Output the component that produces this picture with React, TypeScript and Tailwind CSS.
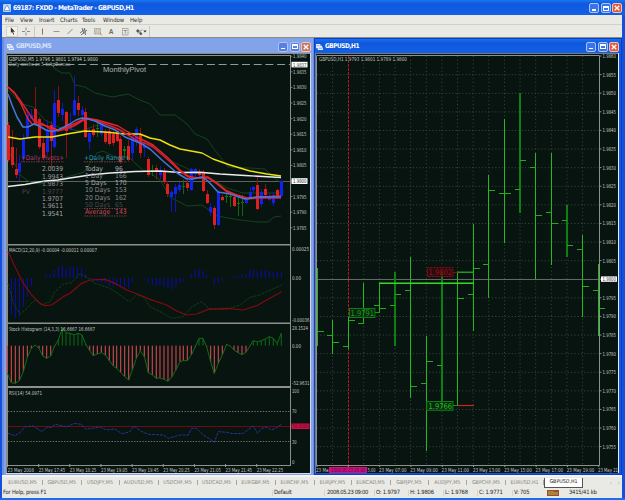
import { clsx } from "clsx";

type Candle = [x: number, high: number, low: number, top: number, bottom: number, tone: "r" | "b" | "g"];

const menus = [
  { label: "File", width: "w-[15px]" },
  { label: "View", width: "w-[19px]" },
  { label: "Insert", width: "w-[21px]" },
  { label: "Charts", width: "w-[22px]" },
  { label: "Tools", width: "w-[21px]" },
  { label: "Window", width: "w-[27px]" },
  { label: "Help", width: "w-[20px]" },
];

const chartTabs = [
  { label: "EURUSD,M5", width: "w-[40px]" },
  { label: "GBPUSD,M5", width: "w-[38.5px]" },
  { label: "USDJPY,M5", width: "w-[38px]" },
  { label: "AUDUSD,M5", width: "w-[39px]" },
  { label: "USDCHF,M5", width: "w-[39px]" },
  { label: "USDCAD,M5", width: "w-[39px]" },
  { label: "EURGBP,M5", width: "w-[39px]" },
  { label: "EURCHF,M5", width: "w-[39px]" },
  { label: "EURJPY,M5", width: "w-[37px]" },
  { label: "EURCAD,M5", width: "w-[39px]" },
  { label: "GBPJPY,M5", width: "w-[38px]" },
  { label: "AUDJPY,M5", width: "w-[38.5px]" },
  { label: "GBPCHF,M5", width: "w-[39px]" },
  { label: "EURUSD,H1", width: "w-[38px]" },
];

const candles: Candle[] = [
  [8, 122, 162, 125, 160, "r"],
  [11.7, 130, 168, 147, 165, "r"],
  [15.5, 148, 178, 169, 175, "r"],
  [19.4, 155, 181, 163, 172, "b"],
  [23.4, 134, 162, 138, 158, "b"],
  [27.2, 112, 139, 115, 137, "b"],
  [31, 109, 119, 115, 119, "b"],
  [35, 87, 125, 109, 125, "r"],
  [39, 117, 149, 119, 147, "r"],
  [42.8, 138, 160, 143, 158, "r"],
  [46.6, 120, 155, 130, 152, "b"],
  [50.6, 121, 168, 125, 141, "r"],
  [54.4, 90, 149, 103, 147, "b"],
  [58.4, 86, 117, 100, 113, "r"],
  [62.3, 103, 121, 109, 115, "b"],
  [66.2, 111, 158, 112, 131, "r"],
  [70, 113, 130, 124, 129, "b"],
  [74, 76, 116, 100, 115, "b"],
  [78, 96, 116, 103, 110, "r"],
  [82, 106, 119, 110, 115, "b"],
  [85.4, 108, 138, 112, 137, "r"],
  [89.4, 128, 150, 133, 142, "b"],
  [93.4, 124, 137, 129, 135, "r"],
  [97.4, 119, 137, 128, 129, "g"],
  [101.3, 122, 136, 125, 134, "b"],
  [105.2, 129, 144, 132, 142, "r"],
  [109, 128, 146, 131, 144, "r"],
  [113, 131, 146, 134, 143, "r"],
  [117, 129, 142, 131, 141, "r"],
  [120.4, 136, 164, 139, 162, "r"],
  [124.4, 146, 158, 149, 151, "g"],
  [128.4, 140, 162, 146, 160, "r"],
  [132.4, 134, 160, 137, 153, "b"],
  [136.3, 127, 146, 129, 142, "b"],
  [140.2, 128, 158, 134, 153, "r"],
  [144.1, 142, 157, 146, 148, "b"],
  [148.1, 157, 177, 159, 175, "r"],
  [152, 165, 176, 170, 171, "g"],
  [155.8, 165, 179, 168, 172, "r"],
  [160, 166, 179, 170, 175, "b"],
  [164, 168, 184, 172, 182, "r"],
  [167.4, 181, 197, 184, 194, "r"],
  [171.4, 190, 212, 192, 197, "b"],
  [175.4, 184, 212, 187, 194, "b"],
  [179.4, 182, 192, 185, 190, "b"],
  [183.4, 180, 194, 186, 187, "g"],
  [187.3, 180, 191, 183, 188, "r"],
  [191.2, 168, 191, 169, 190, "b"],
  [195.1, 168, 177, 169, 174, "b"],
  [199, 169, 178, 172, 175, "r"],
  [203, 170, 192, 172, 191, "r"],
  [206.9, 190, 204, 194, 203, "r"],
  [210.4, 203, 216, 207, 212, "b"],
  [214.4, 206, 229, 208, 225, "r"],
  [218.4, 190, 226, 192, 225, "b"],
  [222.4, 195, 201, 197, 200, "r"],
  [226.3, 193, 203, 196, 197, "g"],
  [230.2, 193, 207, 196, 197, "g"],
  [234.2, 194, 207, 197, 206, "r"],
  [238.2, 196, 216, 203, 204, "g"],
  [242, 195, 216, 202, 203, "g"],
  [246, 197, 204, 200, 203, "b"],
  [249.9, 187, 199, 192, 198, "b"],
  [253.4, 186, 192, 187, 190, "b"],
  [257.4, 177, 210, 185, 209, "r"],
  [261.4, 189, 207, 192, 204, "b"],
  [265.4, 184, 198, 189, 195, "r"],
  [269.2, 194, 201, 196, 200, "b"],
  [273.2, 192, 206, 195, 203, "b"],
  [277.2, 189, 198, 190, 196, "r"],
  [281.2, 180, 197, 181, 196, "b"],
];

const body = { r: "#e02020", b: "#1023ec", g: "#0b7a12" };
const wick = { r: "#8c1010", b: "#0d19b8", g: "#0b6a10" };

const pivots = [
  ["2.0039", 171, "#a8a4ac"],
  ["1.9943", 178.5, "#9a949e"],
  ["1.9873", 186, "#8d8890"],
  ["1.9777", 193.5, "#4c464c"],
  ["1.9707", 200.7, "#a39ca4"],
  ["1.9611", 208, "#a09aa0"],
  ["1.9541", 215.5, "#aaa6ac"],
] as const;

const ranges = [
  ["Today", "96", 171, "#b4b0b8"],
  ["1 Day", "166", 178.3, "#8d8890"],
  ["5 Days", "170", 185, "#a8a4a8"],
  ["10 Days", "153", 192.2, "#908a90"],
  ["20 Days", "162", 199.6, "#8c868c"],
  ["50 Days", "65", 207, "#50484e"],
  ["Average", "143", 214.4, "#c84858"],
] as const;

// bars and curves of the sub windows are kept at 3x and scaled down by their group
const macd: [number, number][] = [
  [34, 225], [46, 235], [58, 230], [70, 200], [82, 170], [94, 138], [138, 105], [150, 102], [162, 90], [175, 80],
  [187, 75], [198, 85], [210, 80], [220, 80], [232, 80], [245, 85], [257, 102], [269, 118], [280, 125], [292, 125],
  [304, 130], [316, 130], [328, 138], [340, 138], [350, 140], [362, 142], [374, 148], [386, 145], [397, 125],
  [433, 117], [445, 128], [457, 133], [469, 138], [480, 138], [492, 140], [504, 145], [516, 148], [528, 140],
  [540, 128], [550, 123], [574, 103], [586, 88], [597, 88], [609, 92], [620, 105], [643, 135], [655, 128],
  [667, 122], [680, 118], [702, 110], [714, 108], [726, 106], [738, 102], [750, 90], [760, 88], [772, 95],
  [784, 90], [796, 90], [808, 93], [820, 97], [832, 96], [844, 95],
];

const histogram: [number, number][] = [
  [22, 160], [34, 188], [46, 190], [58, 182], [70, 155], [82, 112], [94, 85], [105, 75], [117, 85], [128, 108],
  [140, 115], [152, 108], [163, 80], [175, 60], [187, 25], [198, 38], [210, 40], [222, 45], [234, 40], [246, 45],
  [257, 72], [269, 92], [280, 107], [292, 102], [304, 98], [316, 105], [328, 122], [340, 138], [350, 145],
  [362, 157], [374, 170], [386, 180], [397, 150], [409, 115], [421, 92], [433, 110], [445, 158], [457, 165],
  [469, 175], [480, 174], [492, 178], [504, 184], [516, 170], [528, 150], [540, 125], [550, 122], [562, 122],
  [574, 105], [586, 80], [597, 55], [609, 55], [620, 80], [632, 125], [643, 160], [655, 130], [667, 105],
  [680, 73], [690, 78], [702, 90], [714, 98], [726, 104], [738, 97], [750, 78], [760, 62], [772, 66], [784, 62],
  [796, 57], [808, 50], [820, 55], [832, 70], [844, 40],
];

// x, high, low, open, close, stroke width
const bars: [number, number, number, number | null, number | null, number][] = [
  [317.5, 268, 346, null, 331.5, 1],
  [332.5, 320, 354, 335.5, 342.5, 1],
  [348.5, 316.5, 349, 346, 320.5, 1],
  [363.5, 283, 323.5, 323.5, 309.5, 1],
  [379.5, 283, 312.5, 305.5, 308.5, 1],
  [395, 272.3, 346, 305.5, 294.5, 2],
  [410.5, 257, 398, 290.5, 386.5, 1],
  [426.5, 335.5, 451, 383.5, 361.5, 1],
  [442, 272.3, 408, 365.5, 401.5, 2],
  [457.5, 272, 405.5, 405.5, 298.5, 1],
  [473.5, 223.5, 331, 294.5, 268.5, 1],
  [488.5, 175, 298, 264.5, 190.5, 1],
  [504.5, 119, 243, 193.5, 193.5, 1],
  [520, 93, 212.5, 189.5, 160.5, 2],
  [535.5, 153, 279, 167.5, 215.5, 1],
  [551.5, 153, 265, 212.5, 223.5, 1],
  [567, 205, 257, 220.5, 245.5, 2],
  [582.5, 234.5, 317, 249.5, 286.5, 1],
  [598.5, 264, 336, 290.5, 308.5, 1],
];

const leftTimes = ["2008", "17:45", "18:25", "19:05", "19:45", "20:25", "21:05", "21:45", "22:25"];
const rightTimes = ["07:00", "09:00", "11:00", "13:00", "15:00", "17:00", "19:00"];
const leftPrices = [
  "1.9840", "1.9835", "1.9830", "1.9825", "1.9820", "1.9815", "1.9810", "1.9805", "", "1.9795", "1.9790", "1.9785",
];

function Label({ x, y, w, fill = "#c2c6c4", size = 5.5, children }: {
  x: number;
  y: number;
  w?: number;
  fill?: string;
  size?: number;
  children: string;
}) {
  return (
    <text x={x} y={y} fontSize={size} fill={fill} textLength={w} lengthAdjust="spacingAndGlyphs">
      {children}
    </text>
  );
}

function Curve({ points, stroke, width = 1.2, dash }: {
  points: string;
  stroke: string;
  width?: number;
  dash?: string;
}) {
  return <polyline points={points} fill="none" stroke={stroke} strokeWidth={width} strokeDasharray={dash} strokeLinejoin="round" />;
}

function CaptionButtons({ faded }: { faded?: boolean }) {
  const blue = faded ? "bg-[#5a7fdc]" : "bg-[#3b74ea]";
  return (
    <div className="flex gap-[1.5px]">
      <span className={clsx("flex size-[10px] items-end rounded-[2px] border border-[#a9c4fa] p-[1.5px]", blue)}>
        <i className="h-[1.5px] w-[4px] bg-white" />
      </span>
      <span className={clsx("flex size-[10px] items-center justify-center rounded-[2px] border border-[#a9c4fa]", blue)}>
        <i className="h-[5px] w-[6px] border border-t-2 border-white" />
      </span>
      <span className={clsx("flex size-[10px] items-center justify-center rounded-[2px] border border-[#f0c4bc]", faded ? "bg-[#c8745f]" : "bg-[#e2593a]")}>
        <svg className="size-[6px]" viewBox="0 0 6 6">
          <path d="M.7.7 5.3 5.3M5.3.7.7 5.3" stroke="#fff" strokeWidth="1.3" />
        </svg>
      </span>
    </div>
  );
}

function ChartIcon() {
  return (
    <svg className="h-[6px] w-[7px]" viewBox="0 0 8 7">
      <path d="M0 0h5v2h2v2h1v3H2V5H0z" fill="#e9f0ff" />
      <path d="M1 2h3M3 5h4" stroke="#5f86d8" strokeWidth=".8" />
    </svg>
  );
}

function PivotChart() {
  return (
    <svg className="block h-[421px] w-[305px]" viewBox="6 53 305 421" fontFamily="'DejaVu Sans', sans-serif">
      <rect x="6" y="53" width="305" height="421" fill="#08140f" />
      <path d="M6 53.5h305M6.5 53v421" stroke="#8b8a86" />
      <path d="M7.5 55.5h283M7.5 55v410.3M290.5 55v410.5" stroke="#8a8f8c" fill="none" />
      <path d="M7 244.7h284M7 323.3h284" stroke="#8f8f8d" strokeWidth="1.5" />
      <path d="M7 387h284" stroke="#8f8f8d" strokeWidth="2" />
      <path d="M7 465.5h284" stroke="#8f8f8d" />

      <path d="M8 64.5h282" stroke="#959896" strokeDasharray="8 3.7" />
      <path d="M8 181.5h282" stroke="#5c6260" />

      <Curve stroke="#134a1e" width={0.9} points="50,62 55,69 62,73 70,73 75,85 85,87 95,93 112,97 128,94 140,100 150,104 160,115 175,115 187,124 195,134 207,139 214,149 228,167 250,168 265,169 273,177 281,183" />
      <Curve stroke="#134a1e" width={0.9} points="8,90 22,104 33,107 45,120 58,127 80,131 98,125 115,129 130,132 148,142 160,152 173,162 195,172 210,178 227,188 243,193 281,193" />
      <Curve stroke="#134a1e" width={0.9} points="8,150 20,175 28,181 40,184 67,177 84,172 92,160 97,153 103,151 117,158 128,156 136,164 143,170 150,173 160,180 170,197 187,206 202,205 217,216 240,220 258,222 268,222 274,217 281,216" />

      <g shapeRendering="crispEdges">
        {candles.map(([x, high, low, top, bottom, tone]) => (
          <g key={x}>
            <rect x={Math.round(x)} y={high} width="1" height={low - high} fill={wick[tone]} />
            <rect x={Math.round(x) - 1} y={top} width="3" height={bottom - top} fill={body[tone]} />
          </g>
        ))}
      </g>

      <Curve stroke="#f0e010" width={1.4} points="8,137 20,139 35,137 52,137 67,134 85,131 105,132 125,134 140,134 150,138 160,140 170,145 180,149 202,153 213,159 230,165 250,171 267,174 281,176" />
      <Curve stroke="#ececec" width={1.4} points="8,186.5 25,184.5 45,181 58,180 70,178 90,175 110,173 135,171.5 160,171 180,172.5 200,172.3 220,174 245,175.5 281,177.5" />
      <Curve stroke="#d02040" width={1.5} points="8,87 14,92 20,100 28,112 34,121 43,124 50,129 58,131 66,129 74,126 82,121 88,119 97,121 108,125 118,129 128,135 138,141 147,144 153,147 167,159 180,171 188,177 200,178 208,178 217,184 227,192 237,196 247,199 260,198 281,198" />
      <Curve stroke="#ee2222" width={1.4} points="8,87 15,94 21,104 28,119 32,124 43,125 50,127 58,130 70,126 80,121 86,118 97,120 108,123 118,126 128,132 138,138 147,142 153,145 167,157 180,170 188,176 195,178 208,177 217,183 227,191 237,195 247,198 260,197 281,196" />
      <Curve stroke="#4a76dc" width={1.5} points="8,94 12,105 17,117 23,127 28,127 34,124 39,126 46,130 52,131.5 58,130 64,127 70,124 76,120 82,118 88,119 95,121 105,126 115,130 125,137 135,141 142,144 150,149 163,161 177,173 187,179 193,179 202,177 208,181 218,192 230,194 245,199 257,197 281,197" />

      <Label x={9} y={61} w={89} fill="#ced4d0">GBPUSD,M5  1.9796 1.9801 1.9794 1.9800</Label>
      <Label x={9} y={66.3} w={61} fill="#a8b0aa">Daily weeks on 5-tickpBureau</Label>
      <text x="103" y="72" fontSize="7.6" fill="#aeb2b4" textLength="43" fontFamily="'Liberation Sans', sans-serif">MonthlyPivot</text>

      <Label x={21} y={159.5} w={43} size={6.6} fill="#b43a78">+Daily Pivots+</Label>
      <path d="M21 161.8h43" stroke="#a03a58" strokeDasharray="1.5 1" strokeWidth=".8" />
      <Label x={22} y={193.5} w={8} size={6.4} fill="#4a444a">PV</Label>
      {pivots.map(([value, y, fill]) => (
        <Label key={value} x={42} y={y} w={21} size={6.8} fill={fill}>{value}</Label>
      ))}
      <Label x={84} y={159.5} w={46} size={6.6} fill="#2e9cb4">+Daily Range+</Label>
      <path d="M84 161.8h43" stroke="#a04858" strokeDasharray="1.5 1" strokeWidth=".8" />
      {ranges.map(([name, value, y, fill]) => (
        <g key={name}>
          <Label x={85} y={y} w={name.length * 3.6} size={6.8} fill={fill}>{name}</Label>
          <Label x={115} y={y} w={value.length * 3.9} size={6.8} fill={fill}>{value}</Label>
        </g>
      ))}
      <path d="M84 208.5h43M84 216h43" stroke="#a04050" strokeDasharray="1.5 1" strokeWidth=".8" />

      {leftPrices.map((price, i) => (
        <g key={i}>
          <path d={`M291 ${56.2 + i * 15.6}h1.5`} stroke="#8f8f8d" strokeWidth=".8" />
          <Label x={293} y={58.1 + i * 15.6} w={13.5}>{price}</Label>
        </g>
      ))}
      <rect x="291.5" y="61.8" width="16" height="5.6" fill="#fff" />
      <Label x={293} y={66.5} w={13.5} fill="#444">1.9837</Label>
      <rect x="291.5" y="178.2" width="16" height="5.8" fill="#fff" />
      <Label x={293} y={183} w={13.5} fill="#222">1.9800</Label>

      <g transform="translate(0 240) scale(.3333)">
        {macd.map(([x, y]) => (
          <rect key={x} x={x - 1.5} y={Math.min(y, 114)} width="3" height={Math.abs(y - 114)} fill="#0c0cae" />
        ))}
        <Curve stroke="#114a16" width={2.4} dash="9 3" points="24,130 40,190 60,223 80,205 105,180 125,195 150,185 165,155 190,132 215,128 240,100 265,115 285,130 330,145 360,165 388,185 410,165 430,170 450,200 490,220 515,235 550,230 575,200 605,185 625,205 655,208 680,208 720,195 750,172 780,165 800,155 845,135" />
        <Curve stroke="#820a10" width={3.6} points="24,35 45,80 70,130 95,165 120,190 135,197 155,195 190,170 210,160 245,130 270,120 315,118 345,130 380,150 420,165 450,178 500,195 530,213 560,225 590,222 625,208 680,205 730,210 770,197 800,180 845,155" />
      </g>
      <Label x={9} y={252} w={88}>MACD(12,20,9) -0.00004 -0.00011 0.00007</Label>
      <Label x={292} y={250.5} w={17}>0.00025</Label>
      <Label x={292} y={280} w={9}>0.00</Label>
      <Label x={292} y={322} w={17.5}>-0.00036</Label>

      <g transform="translate(0 320) scale(.3333)">
        {histogram.map(([x, y]) => (
          <rect key={x} x={x - 1.7} y={Math.min(y, 77)} width="3.4" height={Math.abs(y - 77)} fill={y > 77 ? "#c8484e" : "#0a6412"} />
        ))}
        <Curve stroke="#126c18" width={3} points={histogram.map((point) => point.join(",")).join(" ")} />
      </g>
      <Label x={9} y={331} w={86}>Stock Histogram (14,3,3) 16.6667 16.6667</Label>
      <Label x={292} y={329.5} w={16}>28.1524</Label>
      <Label x={292} y={347.5} w={9}>0.00</Label>
      <Label x={292} y={385} w={17.5}>-52.9631</Label>

      <path d="M8 411.5h282M8 441.5h282" stroke="#6b706c" strokeDasharray="1.4 1.4" />
      <path d="M8 426.5h282" stroke="#6e0a14" />
      <g transform="translate(0 385) scale(.3333)">
        <Curve stroke="#2438a0" width={2.8} dash="9 3" points="24,145 45,152 60,143 75,125 100,123 125,140 140,128 155,127 165,117 200,126 222,115 245,118 258,133 300,126 320,135 345,132 365,146 388,141 402,123 420,137 445,148 490,150 505,160 540,150 565,150 575,130 590,130 610,150 630,162 643,172 655,140 680,142 700,146 730,145 760,123 773,145 785,130 800,127 815,135 830,128 845,117" />
      </g>
      <Label x={9} y={394.5} w={33}>RSI(14) 54.0971</Label>
      <Label x={292} y={393} w={7}>100</Label>
      <Label x={292} y={413} w={4.6}>70</Label>
      <Label x={292} y={443.5} w={4.6}>30</Label>
      <Label x={292} y={463.5} w={2.5}>0</Label>
      <rect x="291.5" y="423.5" width="18" height="5.5" fill="#d01048" />
      <Label x={292.5} y={428.2} w={16} fill="#500a20">50.0000</Label>

      {leftTimes.map((time, i) => (
        <g key={time}>
          <path d={`M${7.5 + i * 31.15} 464v3`} stroke="#9a9a98" />
          <Label x={7.5 + i * 31.15} y={471.5} w={26.5}>{`23 May ${time}`}</Label>
        </g>
      ))}
      <path d="M6 473.5h305M310.5 53v421" stroke="#d4d8e4" />
    </svg>
  );
}

function HourChart() {
  return (
    <svg className="block h-[420px] w-[304px]" viewBox="315 53 304 420" fontFamily="'DejaVu Sans', sans-serif">
      <rect x="315" y="53" width="304" height="420" fill="#08140f" />
      <path d="M315 53.5h304M315.5 53v420" stroke="#77787a" />
      <path d="M316.5 465.5V55.5h283v410z" fill="none" stroke="#8b8f8d" />

      {Array.from({ length: 17 }, (_, i) => i !== 1 && (
        <path key={i} d={`M${332.5 + i * 15.63} 56v409`} stroke="#414a46" strokeDasharray="1.1 2.6" strokeWidth=".9" />
      ))}
      {Array.from({ length: 21 }, (_, i) => (
        <path key={i} d={`M317 ${74.7 + i * 18.6}h282`} stroke="#414a46" strokeDasharray="1.1 2.2" strokeWidth=".9" />
      ))}
      <path d="M317 279.5h282" stroke="#636866" />
      <path d="M348.5 56v409" stroke="#b01426" strokeDasharray="3 1" />

      <g shapeRendering="crispEdges">
        {bars.map(([x, high, low, open, close, width]) => (
          <g key={x} stroke={width > 1 ? "#0e8012" : "#26b81e"}>
            <path d={`M${x} ${high}V${low}`} strokeWidth={width} />
            {open && <path d={`M${x - 5.5} ${open}h5.5`} stroke="#1fae18" />}
            {close && <path d={`M${x} ${close}h6`} stroke="#1fae18" />}
          </g>
        ))}
      </g>
      <path d="M379 283.2h94.5" stroke="#30dc22" strokeWidth="1.5" />
      <path d="M457 272.2h16.5" stroke="#25bf1c" strokeWidth="1.2" />
      <path d="M457.5 405.5h16.5" stroke="#d02020" strokeWidth="1.2" />
      <path d="M375 312.5h4.5M453 405.5h4.5" stroke="#1a9418" />
      <path d="M453 272.5h4.5" stroke="#7c1010" />

      <rect x="349.5" y="308.5" width="25.4" height="9" fill="#0a3510" fillOpacity=".6" stroke="#107a14" />
      <Label x={350.5} y={316} w={23.5} size={7.8} fill="#18a01a">1.9791</Label>
      <rect x="427.5" y="267.7" width="25.6" height="8.8" fill="#3a060c" fillOpacity=".7" stroke="#8c1020" strokeDasharray="2 1" />
      <Label x={428.5} y={275.3} w={23.5} size={7.8} fill="#a01018">1.9802</Label>
      <rect x="426.7" y="401.5" width="26.3" height="8.8" fill="#0a3510" fillOpacity=".6" stroke="#107a14" />
      <Label x={428.5} y={409} w={23.5} size={7.8} fill="#22c41e">1.9766</Label>

      <Label x={319} y={61} w={88}>GBPUSD,H1  1.9793 1.9801 1.9789 1.9800</Label>
      {Array.from({ length: 22 }, (_, i) => (
        <g key={i}>
          <path d={`M600 ${56 + i * 18.6}h1.5`} stroke="#8b8f8d" />
          {i !== 12 && (
            <Label x={602.5} y={58 + i * 18.6} w={13.5}>{(1.986 - i * 0.0005).toFixed(4)}</Label>
          )}
        </g>
      ))}
      <rect x="601" y="276.4" width="16" height="5.4" fill="#fff" />
      <Label x={602.5} y={281.2} w={13.5} fill="#333">1.9800</Label>

      <Label x={316} y={472} w={12.5}>23 Ma</Label>
      <rect x="329" y="467" width="38" height="6" fill="#d0107c" />
      <Label x={331} y={472} w={34} fill="#5c0638">2008.05.23 05:00</Label>
      <Label x={367.5} y={472} w={8}>5:00</Label>
      {rightTimes.map((time, i) => (
        <Label key={time} x={379 + i * 31.3} y={472} w={27.5}>{`23 May ${time}`}</Label>
      ))}
      <Label x={598} y={472} w={20}>23 May 21</Label>
      {Array.from({ length: 10 }, (_, i) => (
        <path key={i} d={`M${317 + i * 31.3} 465v2`} stroke="#9a9a98" />
      ))}
      <path d="M618.5 53v420" stroke="#e8ecf6" />
    </svg>
  );
}

function Toolbar() {
  return (
    <div className="flex h-[13px] items-center border-t border-[#d3d0be] pl-[4px]">
      <span className="flex h-[11px] w-[12px] items-center justify-center border border-[#d4d2c8] bg-[#f2f1ea]">
        <svg className="h-[8px] w-[5px]" viewBox="0 0 6 9">
          <path d="M1 0v7l1.5-1.5L4 9l1-.6-1.4-3H6z" fill="#333" />
        </svg>
      </span>
      <svg className="ml-px h-[12px] w-[136px]" viewBox="19 25 136 12" fill="none">
        <path d="M26 27.5v3M26 32.5v3M22 31.5h3M27 31.5h3" stroke="#8d8c84" />
        <path d="M34.5 26v11M149.5 26v11" stroke="#cbc8bb" />
        <path d="M42.5 28.5v6" stroke="#a0685a" />
        <path d="M53.5 31.5h6" stroke="#a5968a" />
        <path d="m67.5 34 5-5" stroke="#96867c" />
        <path d="m80 33 5-4M81 35l6-5M82 28l2 6M84.5 28l1 7" stroke="#66635e" strokeWidth=".9" />
        <rect x="94.5" y="28.5" width="6" height="5.5" stroke="#a39e8f" strokeDasharray="1 .6" fill="#cbc8bc" />
        <path d="m100 33 2 2.500" stroke="#c98a56" />
        <text x="108.8" y="34.3" fontSize="6.6" fontWeight="700" fill="#6e6c68" fontFamily="'Liberation Sans', sans-serif">A</text>
        <rect x="122.5" y="28.5" width="5.5" height="6.5" stroke="#8e8b80" strokeDasharray="1.2 .6" />
        <text x="123.5" y="34.2" fontSize="5.6" fill="#5e5c58" fontFamily="'Liberation Sans', sans-serif">T</text>
        <path d="m136 31 1.800-2 2 2-2 1.800zM139 33l2-1 1.500 2-2 1.200z" fill="#575650" />
        <path d="m138 33.500 4-4" stroke="#575650" strokeWidth=".7" />
        <path d="M143.300 30.600h3.400L145 32.600z" fill="#333" />
      </svg>
    </div>
  );
}

export default function App() {
  return (
    <div className="flex h-[500px] w-[625px] flex-col overflow-hidden bg-[#1450dc] font-['DejaVu_Sans_Condensed','DejaVu_Sans',sans-serif]">
      <header className="flex h-[15px] shrink-0 items-center justify-between bg-linear-to-b from-[#1678f4] via-[#1058dc] via-25% to-[#1260ea] pt-px pr-[3px] pl-[3px]">
        <div className="flex items-center gap-[2px]">
          <svg className="size-[8px]" viewBox="0 0 8 8">
            <rect width="8" height="8" rx="1" fill="#b8d4f8" />
            <path d="M4 1 7 6.5H1z" fill="#fff" stroke="#3672c4" strokeWidth=".6" />
          </svg>
          <span className="text-[6.7px] leading-none font-bold tracking-[-0.42px] whitespace-pre text-white">
            69187: FXDD - MetaTrader - GBPUSD,H1
          </span>
        </div>
        <CaptionButtons />
      </header>

      <div className="mr-[3px] ml-[2px] flex min-h-0 flex-1 flex-col bg-[#e9e9e5]">
        <nav className="flex h-[9px] shrink-0 items-center pl-[3px] text-[6px] leading-none text-[#2c2c2a]">
          {menus.map((menu) => (
            <span key={menu.label} className={menu.width}>{menu.label}</span>
          ))}
        </nav>
        <Toolbar />

        <main className="flex h-[438px] shrink-0 border-t border-[#8d8c84] bg-[#2a50d8]">
          <section className="flex w-[312px] flex-col border-r border-l-2 border-[#6a8ee4] bg-[#82a2ea] pr-[2px] pl-[2px]">
            <div className="flex h-[15px] shrink-0 items-center gap-[2px] pt-[2px] pl-px text-[6.5px] font-bold text-[#d6e2fa]">
              <ChartIcon />
              <span className="flex-1 leading-none tracking-[-0.5px]">GBPUSD,M5</span>
              <CaptionButtons faded />
            </div>
            <PivotChart />
          </section>
          <section className="flex flex-1 flex-col border border-[#0c3cc8] bg-[#1259e0]">
            <div className="flex h-[14px] shrink-0 items-center gap-[2px] bg-linear-to-b from-[#1870f0] via-[#1058da] via-30% to-[#1260e8] pt-px pr-[2px] pl-px text-[6.5px] font-bold text-white">
              <ChartIcon />
              <span className="flex-1 leading-none tracking-[-0.5px]">GBPUSD,H1</span>
              <CaptionButtons />
            </div>
            <HourChart />
          </section>
        </main>

        <div className="flex h-[13px] shrink-0 items-center border-t-2 border-[#f4f4f0] pl-px text-[5.3px] leading-none text-[#8a867c]">
          {chartTabs.map((tab) => (
            <span key={tab.label} className={clsx("shrink-0 border-r border-[#aaa69a] text-center", tab.width)}>{tab.label}</span>
          ))}
          <span className="flex h-[10px] w-[39px] shrink-0 items-center justify-center border border-t-0 border-[#55544e] bg-white text-[#222]">GBPUSD,H1</span>
          <span className="flex flex-1 justify-end gap-[6px] pr-[2px] text-[6px] text-[#a09c90]">
            <i className="not-italic">‹</i>
            <i className="not-italic">›</i>
          </span>
        </div>

        <footer className="flex h-[10px] shrink-0 items-center text-[5.8px] leading-none tracking-[-0.2px] whitespace-nowrap text-[#262624]">
          <span className="w-[270px] pl-px">For Help, press F1</span>
          <span className="w-[52px] border-l border-[#d8d4c8] pl-px">Default</span>
          <span className="w-[50px] border-l border-[#d8d4c8] pl-[2px] tracking-[-0.35px]">2008.05.23 09:00</span>
          <span className="w-[34px] border-l border-[#d8d4c8] pl-px">O: 1.9797</span>
          <span className="w-[35px] border-l border-[#d8d4c8] pl-px">H: 1.9806</span>
          <span className="w-[34px] border-l border-[#d8d4c8] pl-px">L: 1.9768</span>
          <span className="w-[35px] border-l border-[#d8d4c8] pl-px">C: 1.9771</span>
          <span className="w-[35px] border-l border-[#d8d4c8] pl-px">V: 705</span>
          <svg className="h-[6px] w-[12px]" viewBox="0 0 12 6">
            <rect width="12" height="6" fill="#9c4c30" />
            <path d="M2 1v4M4 1v4M6 1v4M8 2v3M10 2v3" stroke="#b9bc40" />
          </svg>
          <span className="pl-[10px]">3415/41 kb</span>
        </footer>
      </div>
      <div className="h-[2px] shrink-0 bg-[#1e6cf0]" />
    </div>
  );
}
